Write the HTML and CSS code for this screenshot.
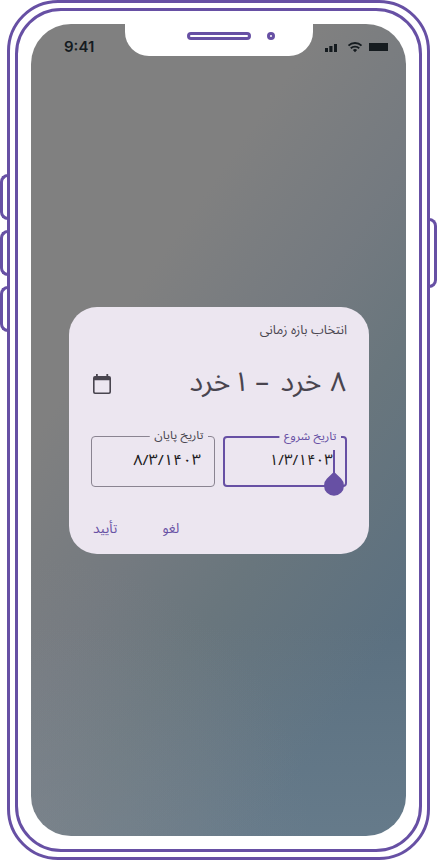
FILE: index.html
```html
<!DOCTYPE html>
<html lang="fa">
<head>
<meta charset="utf-8">
<title>انتخاب بازه زمانی</title>
<link rel="stylesheet" href="styles.css">
</head>
<body>
<div class="phone">
  <span class="key key-1"></span>
  <span class="key key-2"></span>
  <span class="key key-3"></span>
  <span class="key key-power"></span>
  <div class="bezel">
    <div class="screen">
      <header class="status">
        <span class="time">9:41</span>
        <div class="notch"><i class="speaker"></i><i class="camera"></i></div>
        <svg class="signals" width="64" height="12" viewBox="0 0 64 12">
          <path d="M0 7h3v4H0zM4.3 5h3.2v6H4.3zM9 3h3v8H9z"/>
          <g fill="none" stroke="#151b1f" stroke-width="1.9">
            <path d="M23.5 4.6a9.3 9.3 0 0 1 13 0"/>
            <path d="M25.8 7.3a6 6 0 0 1 8.4 0"/>
          </g>
          <path d="M30 11.2l-2.1-2.2a3 3 0 0 1 4.2 0z"/>
          <path d="M44 2h19v8H44z"/>
        </svg>
      </header>
      <main class="stage">
        <section class="dialog" dir="rtl">
          <h1 class="title">انتخاب بازه زمانی</h1>
          <div class="headline">
            <div class="range"><span class="day">۸</span> <span class="month">خرد</span> <span class="dash">–</span> <span class="day one">۱</span> <span class="month">خرد</span></div>
            <svg class="calendar" width="20" height="22" viewBox="0 0 20 22">
              <path fill-rule="evenodd" d="M4 1h1.8v2h8.6V1h1.8v2H17a2 2 0 0 1 2 2v14a2 2 0 0 1-2 2H3a2 2 0 0 1-2-2V5a2 2 0 0 1 2-2h1zM2.6 7.3v11.4a.7.7 0 0 0 .7.7h13.4a.7.7 0 0 0 .7-.7V7.3z"/>
            </svg>
          </div>
          <div class="fields">
            <div class="field active">
              <span class="label">تاریخ شروع</span>
              <span class="value" dir="ltr">۱/۳/۱۴۰۳</span>
              <i class="caret"></i>
              <svg class="handle" width="22" height="26" viewBox="0 0 22 26"><path d="M11 .8L18 7.6a10 10 0 1 1-14 0z"/></svg>
            </div>
            <div class="field">
              <span class="label">تاریخ پایان</span>
              <span class="value" dir="ltr">۸/۳/۱۴۰۳</span>
            </div>
          </div>
          <div class="actions">
            <span class="action">لغو</span>
            <span class="action">تأیید</span>
          </div>
        </section>
      </main>
    </div>
  </div>
</div>
</body>
</html>
```
FILE: styles.css
```css
* { box-sizing: border-box; }
body { margin: 0; background: #fff; font-family: "Noto Sans Arabic", Vazirmatn, "Noto Sans", "DejaVu Sans", sans-serif; }
.phone { position: relative; width: 423px; height: 860px; margin-left: 7px; padding: 5px; border: 3px solid #6750a4; border-radius: 51px; }
.bezel { height: 844px; padding: 13px; border: 3px solid #6750a4; border-radius: 46px; }
.key { position: absolute; left: -10px; width: 10px; height: 46px; border: 3px solid #6750a4; border-right: 0; border-radius: 8px 0 0 8px; }
.key-1 { top: 171px; }
.key-2 { top: 227px; }
.key-3 { top: 283px; }
.key-power { left: auto; right: -10px; top: 215px; height: 70px; border: 3px solid #6750a4; border-left: 0; border-radius: 0 8px 8px 0; }
.screen { width: 375px; height: 812px; border-radius: 40px; overflow: hidden; display: flex; flex-direction: column; background: radial-gradient(circle at 0 100%, #8c8a9055, transparent 280px), linear-gradient(180deg, transparent 74%, #8297a644), linear-gradient(125deg, #808080 31%, #747a80 50%, #69767d 63%, #5b7080 84%, #5b7080); }
.status { height: 32px; display: flex; align-items: flex-start; }
.time { width: 94px; padding: 13px 0 0 33px; font: 600 15px/20px Inter, sans-serif; color: #151b1f; }
.notch { width: 187.5px; height: 32px; padding: 8px 0 0 62px; display: flex; gap: 16px; background: #fff; border-radius: 0 0 24px 24px; }
.speaker { width: 64px; height: 8px; border: 3px solid #6750a4; border-radius: 4px; }
.camera { width: 8px; height: 8px; border: 3px solid #6750a4; border-radius: 50%; }
.signals { margin: 17px 0 0 12.5px; fill: #151b1f; }
.stage { padding: 251px 37px 0 38px; }
.dialog { height: 247px; padding: 13px 22px 0; border-radius: 28px; background: #ece6f0; color: #49454f; }
.title { margin: 0; font-size: 12.9px; font-weight: 400; line-height: 20px; }
.headline { height: 60px; margin-top: 14px; display: flex; justify-content: space-between; }
.range { display: flex; padding: 0 1px 0 0; font-size: 27.5px; line-height: 56px; white-space: nowrap; }
.month { transform: scaleX(1.04); transform-origin: 100% 50%; margin: 0 9px 0 4px; }
.dash { margin: 0 9px 0 6px; }
.one { margin-left: -6px; }
.calendar { margin: 19px 0 0 1px; fill: #49454f; }
.fields { display: flex; gap: 8px; margin-top: 22px; }
.field { position: relative; width: 124px; height: 51px; border: 1px solid #8a8491; border-radius: 4px; }
.field.active { border: 2px solid #6750a4; }
.label { position: absolute; top: -10px; right: 6px; padding: 0 4px; background: #ece6f0; font-size: 11px; line-height: 17px; white-space: nowrap; transform: scaleX(1.12); transform-origin: 100% 50%; }
.active .label { color: #6750a4; right: 4px; }
.value { display: block; padding: 12px 13px 0 0; text-align: right; font-size: 15px; line-height: 22px; color: #1d1b20; transform: scaleX(1.08); transform-origin: 110px 50%; }
.active .value { padding: 11px 12px 0 0; font-size: 15.2px; transform: none; }
.caret { position: absolute; right: 10.5px; top: 12px; width: 2px; height: 24px; background: #6750a4; }
.handle { position: absolute; right: .5px; top: 33px; fill: #6750a4; }
.actions { display: flex; gap: 45px; justify-content: flex-end; padding: 30px 0 0 2px; font-size: 13.6px; line-height: 24px; color: #6750a4; }
```
